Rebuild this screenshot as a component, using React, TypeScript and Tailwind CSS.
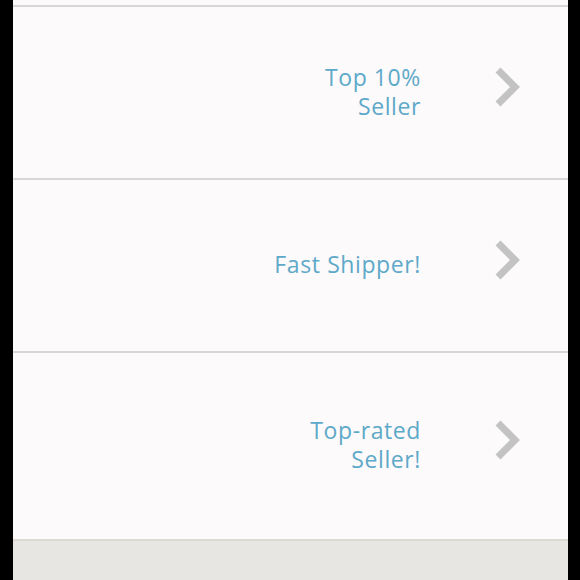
const rows = [
  { lines: ['Top 10%', 'Seller'], h: 'h-[173px]' },
  { lines: ['Fast Shipper!'], h: 'h-[173px]' },
  { lines: ['Top-rated', 'Seller!'], h: 'h-[188px]' },
];

function Chevron() {
  return (
    <svg width="30" height="42" viewBox="0 0 30 42" className="shrink-0">
      <polyline
        points="5,4 22,21 5,38"
        fill="none"
        stroke="#c3c3c3"
        strokeWidth="7"
        strokeLinejoin="miter"
        strokeLinecap="butt"
      />
    </svg>
  );
}

export default function App() {
  return (
    <div className="w-[580px] h-[580px] bg-black flex pr-[12px] pl-[13px] overflow-hidden">
      <div className="flex-1 flex flex-col bg-[#fcfafb]">
        <div className="h-[5px] shrink-0" />
        {rows.map((row, i) => (
          <div
            key={i}
            className={`${row.h} shrink-0 border-t-[2px] border-[#d8d6d7] flex items-center justify-end pr-[45px]`}
          >
            <div className="text-right text-[23px] leading-[29px] font-normal tracking-[0.6px] text-[#5ea9c9] mr-[72px] -mt-[2px] font-['Open_Sans',sans-serif]">
              {row.lines.map((l) => (
                <div key={l}>{l}</div>
              ))}
            </div>
            <div className="-mt-[12px]">
              <Chevron />
            </div>
          </div>
        ))}
        <div className="flex-1 bg-[#e8e6e3] border-t-[2px] border-[#dcd9d5]" />
      </div>
    </div>
  );
}
